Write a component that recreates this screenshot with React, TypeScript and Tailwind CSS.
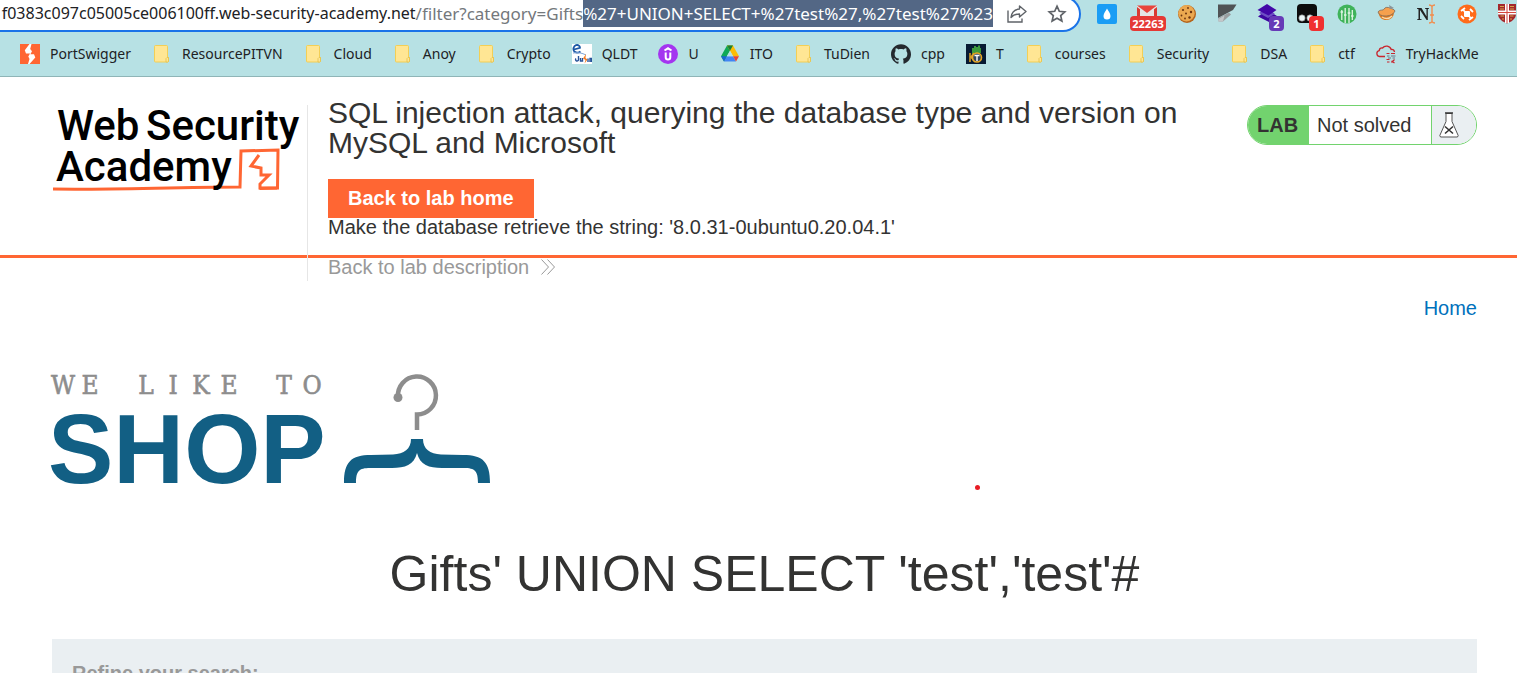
import type { ReactNode } from "react";
import { SiGithub } from "react-icons/si";

function Svg({ box = "0 0 20 20", className = "h-5 w-5", children }: { box?: string; className?: string; children: ReactNode }) {
  return (
    <svg viewBox={box} className={`block shrink-0 ${className}`} fill="none" aria-hidden="true">
      {children}
    </svg>
  );
}

const Folder = () => (
  <Svg>
    <path d="M3.500 1.500h11a1 1 0 0 1 1 1v10.500l1 .5v4l-1 .5h-12a1 1 0 0 1-1-1v-14.500a1 1 0 0 1 1-1z" fill="#ffe694" stroke="#f3cf55" />
    <path d="M14 18v-3.500l1-1h1.500v4l-1 .5z" fill="#ffe694" stroke="#e3c04a" strokeWidth=".8" />
  </Svg>
);

const PortSwigger = () => (
  <Svg>
    <rect width="20" height="20" fill="#ff6633" />
    <path d="M9.500 0 4.800 6.200 6 9.500H10L8.300 12.500 9.500 15 8 20h1.500l5.800-6.500-1.300-3.300H10.400L12 7.200 10.200 5 11.500 0z" fill="#fff" />
  </Svg>
);

const Qldt = () => (
  <Svg>
    <rect width="20" height="20" fill="#fff" />
    <path d="M2 5.500 8 3.800C8 1.500 6 .6 4 1.200 1.500 2 .8 5 2 7c1.300 2 4.500 2 6.500.5" stroke="#1b57a5" strokeWidth="1.800" />
    <path d="M1 9c5-1 9 0 13 2" stroke="#7ea6d6" />
    <path d="M4 14.500a1.500 1.500 0 1 0 2.500 1.500V12M8.500 14v3h2v-3M16 14.500v3.500M18 18v-3.500h1.500V18" stroke="#26539a" strokeWidth="1.400" />
    <path d="m14 10-3 4.500 2.500 1.500-1 3.500 3-4-2-1.500z" fill="#f47b20" />
  </Svg>
);

const Udemy = () => (
  <Svg>
    <circle cx="10" cy="10" r="10" fill="#a435f0" />
    <path d="M6.500 6.500 10 4.300l3.500 2.200M7.700 8.500v4.700a2.300 2.300 0 0 0 4.600 0V8.500" stroke="#fff" strokeWidth="2" />
  </Svg>
);

const Drive = () => (
  <Svg>
    <path d="M7 1.500h6L10 6.700 4 17.500 1 12.300z" fill="#0fa958" />
    <path d="M7 1.500h6l6 10.800h-6z" fill="#fbbc04" />
    <path d="M7 12.300h6l3 5.200H4z" fill="#4285f4" />
    <path d="m1 12.300 3 5.200 3-5.200z" fill="#1967d2" />
    <path d="m13 12.300 3 5.200 3-5.200z" fill="#ea4335" />
    <path d="m7 1.500 3 5.200 3-5.200z" fill="#188038" />
    <path d="m10 6.700 3.200 5.600H6.800z" fill="#b7e1e4" />
  </Svg>
);

const Fist = () => (
  <Svg>
    <rect width="20" height="20" fill="#071a33" />
    <path d="M6 10V4h2V2h2v1h2V1.500h2V4h1v5z" fill="#3c9a3c" />
    <path d="M4 9v9M8 9l-3 4 4 5" stroke="#d09a24" strokeWidth="1.600" />
    <circle cx="11" cy="13.500" r="4.500" stroke="#e8a725" strokeWidth="1.600" fill="#32465e" />
    <path d="M8.500 11.500h5M11 11.500V17" stroke="#fff" strokeWidth="1.400" />
  </Svg>
);

const CloudHack = () => (
  <Svg>
    <path d="M9 12.500H3.500a3 3 0 0 1-.3-5.900A3 3 0 0 1 6.500 4a5 5 0 0 1 8.700 1.500A3 3 0 0 1 18.500 8" stroke="#c9252d" strokeWidth="1.300" />
    <path d="M10.500 9.500h3M15 9.500h4M10.500 15.500h3M15.500 17l3 2M18.500 15.500l-3 3M11 18h2.500" stroke="#c9252d" strokeWidth="1.200" />
    <path d="M11 12h2.500M15 12h4.500M12 14h3M16.500 14H19" stroke="#6b7783" strokeWidth="1.200" />
  </Svg>
);

const bookmarks: { label: string; icon: ReactNode }[] = [
  { label: "PortSwigger", icon: <PortSwigger /> },
  { label: "ResourcePITVN", icon: <Folder /> },
  { label: "Cloud", icon: <Folder /> },
  { label: "Anoy", icon: <Folder /> },
  { label: "Crypto", icon: <Folder /> },
  { label: "QLDT", icon: <Qldt /> },
  { label: "U", icon: <Udemy /> },
  { label: "ITO", icon: <Drive /> },
  { label: "TuDien", icon: <Folder /> },
  { label: "cpp", icon: <SiGithub className="h-5 w-5 shrink-0 text-[#24292e]" /> },
  { label: "T", icon: <Fist /> },
  { label: "courses", icon: <Folder /> },
  { label: "Security", icon: <Folder /> },
  { label: "DSA", icon: <Folder /> },
  { label: "ctf", icon: <Folder /> },
  { label: "TryHackMe", icon: <CloudHack /> },
];

const extensions: { name: string; icon: ReactNode; badge?: string; badgeClass?: string }[] = [
  {
    name: "Droplet",
    icon: (
      <Svg>
        <rect width="20" height="20" rx="2" fill="#1a9df5" />
        <path d="M10 4.500c1 2.500 3.500 4.500 3.500 7.500a3.500 3.500 0 0 1-7 0c0-3 2.500-5 3.500-7.500z" fill="#fff" />
      </Svg>
    ),
  },
  {
    name: "Mail",
    icon: (
      <Svg>
        <rect y="2" width="20" height="14" fill="#e5e5e5" />
        <path d="M0 1.500h20L10 9z" fill="#e8453c" />
        <path d="M0 3v13h3V5.200zM20 3v13h-3V5.200z" fill="#d93a32" />
      </Svg>
    ),
    badge: "22263",
    badgeClass: "-left-[7px] w-9 bg-[#e53935]",
  },
  {
    name: "Cookies",
    icon: (
      <Svg>
        <circle cx="10" cy="10" r="9" fill="#b5651d" />
        <circle cx="9.500" cy="9.300" r="8.200" fill="#eba850" />
        <g fill="#6b3410">
          <circle cx="6" cy="6" r="1.100" />
          <circle cx="11" cy="4" r=".9" />
          <circle cx="14" cy="8" r="1.200" />
          <circle cx="9" cy="9.500" r="1" />
          <circle cx="4.500" cy="11.500" r=".9" />
          <circle cx="12.500" cy="13.500" r="1.200" />
          <circle cx="8" cy="14.500" r=".9" />
        </g>
      </Svg>
    ),
  },
  {
    name: "Flag",
    icon: (
      <Svg>
        <path d="M1 .5h18.500L16 6 1 14z" fill="#505355" />
        <path d="m12 8.500 2 2L6 17.500H1.500V14z" fill="#9a9d9f" />
        <path d="m1.500 15 6-3.500L6 17.500H1.500z" fill="#c3c6c8" />
      </Svg>
    ),
  },
  {
    name: "Layers",
    icon: (
      <Svg>
        <path d="m10 6 10 6-8 6-11-5.500z" fill="#3d07a0" />
        <path d="m10 4 8 6-7 4L2 9z" fill="#6d4fc4" />
        <path d="m10 0 9.500 6-8 5.500L.5 6z" fill="#4308a8" />
      </Svg>
    ),
    badge: "2",
    badgeClass: "left-3 w-[15px] bg-[#673ab7]",
  },
  {
    name: "Monitor",
    icon: (
      <Svg>
        <rect width="20" height="19" rx="4" fill="#0c0c0c" />
        <circle cx="5" cy="14" r="3.200" fill="#e9f5f6" stroke="#777" strokeWidth=".6" />
        <circle cx="13" cy="14" r="3.200" fill="#e9f5f6" stroke="#777" strokeWidth=".6" />
      </Svg>
    ),
    badge: "1",
    badgeClass: "left-3 w-[15px] bg-[#f03030]",
  },
  {
    name: "Equalizer",
    icon: (
      <Svg>
        <circle cx="10" cy="10" r="9.500" fill="#3fb35a" />
        <path d="M4.800 6v10M8.200 4v15M12 4v15M15.300 6v10" stroke="#e0f5e4" strokeWidth="1.300" />
        <path d="M3.500 8h2.600M7 11h2.500M10.700 9h2.600M14 12h2.600" stroke="#e0f5e4" strokeWidth="1.500" />
      </Svg>
    ),
  },
  {
    name: "Quick pot",
    icon: (
      <Svg>
        <path d="M1.500 8.500C2 14 6 16.500 10 16c4-.5 7-3 7-8z" fill="#e07a1f" />
        <path d="M1 8c2-3 5-1 6-3s4-2 6-1 4 1 5 3c-2 4-6 5-10 5-3 0-6-1-7-4z" fill="#f6a04d" stroke="#7a6a5c" strokeWidth=".8" />
        <path d="m12 1 5 3-4 1z" fill="#8b949a" />
        <path d="M5 13c3 2 7 2 10-1" stroke="#fbd9a8" strokeWidth="1.500" />
      </Svg>
    ),
  },
  {
    name: "Name editor",
    icon: (
      <Svg>
        <path d="M0 4h4.500l5 8.500V5L8 4.700V4h4v.7l-1.200.3V16H9.600L3 6v9l1.700.4v.6H0v-.6l1.500-.4V5.200L0 4.700z" fill="#222" />
        <path d="M12 1c2 0 2.500.5 3 1.500.5-1 1-1.500 3-1.500M15 2.500v15M12 19c2 0 2.500-.5 3-1.500.5 1 1 1.500 3 1.500M13 11h4" stroke="#f28c4b" strokeWidth="1.400" />
      </Svg>
    ),
  },
  {
    name: "Orbit",
    icon: (
      <Svg>
        <circle cx="10" cy="10" r="9.500" fill="#ff6b1a" />
        <rect x="7" y="7" width="6" height="6" rx="1" fill="#fff" />
        <path d="m4 7 4-3M13 5l3 3M16 13l-4 3M7 15l-3-3M6 5.500l2 2.500M14 14.500 12 12" stroke="#fff" strokeWidth="1.800" />
      </Svg>
    ),
  },
  {
    name: "Shield",
    icon: (
      <Svg>
        <path d="M1 0h18v10c0 5-5 8-9 9.500C6 18 1 15 1 10z" fill="#a3282c" />
        <path d="M3 2.500h4M3 5h4M13 2.500h4M13 5h4M3.500 12h3.500M13 12h3.500M5 15h2M13 15h2" stroke="#d8a64a" strokeWidth="1.200" />
        <path d="M10 0v19M1 8.500h18" stroke="#fff" strokeWidth="4" />
        <path d="M10 0v19M1 8.500h18" stroke="#d7473f" strokeWidth="1" />
      </Svg>
    ),
  },
];

function BrowserBar() {
  return (
    <header className="overflow-hidden border-b border-[#8fb5b7] bg-[#b7e1e4] font-['Noto_Sans','Open_Sans',sans-serif]">
      <div className="flex h-8 items-start">
        <div className="-mt-1 flex h-9 min-w-0 flex-1 items-center rounded-r-full border-y-2 border-r-2 border-[#1a73e8] bg-white pr-3">
          <div className="flex h-full min-w-0 flex-1 items-start justify-end overflow-hidden pt-[2px] text-[17px] leading-[27px] whitespace-nowrap">
            <span className="text-[16px] text-[#202124]">f0383c097c05005ce006100ff.web-security-academy.net</span>
            <span className="text-[#74787c]">/filter?category=Gifts</span>
            <span className="bg-[#536785] text-white">%27+UNION+SELECT+%27test%27,%27test%27%23</span>
          </div>
          <button type="button" aria-label="Share" className="ml-[14px]">
            <Svg>
              <path d="M1 6.500V18h14v-3.500" stroke="#5f6368" strokeWidth="1.400" />
              <path d="M12.500 2 19 7.500 12.500 13v-3c-4 0-6.500 1-8.500 3.500C4.500 9 7.500 5.500 12.500 5z" stroke="#5f6368" strokeWidth="1.400" strokeLinejoin="round" />
            </Svg>
          </button>
          <button type="button" aria-label="Bookmark this tab" className="ml-5">
            <Svg>
              <path d="m10 2.200 2.300 5.100 5.500.6-4.100 3.700 1.200 5.500-4.900-2.800-4.900 2.800 1.200-5.500L2.200 7.900l5.500-.6z" stroke="#5f6368" strokeWidth="1.700" />
            </Svg>
          </button>
        </div>
        <div className="ml-4 flex shrink-0 gap-5 pt-1">
          {extensions.map((e) => (
            <button key={e.name} type="button" aria-label={e.name} className="relative h-5 w-5">
              {e.icon}
              {e.badge && (
                <span className={`absolute top-3 h-[15px] overflow-hidden rounded-sm text-center text-[11px] leading-[15px] font-bold text-white ${e.badgeClass}`}>
                  {e.badge}
                </span>
              )}
            </button>
          ))}
        </div>
      </div>
      <nav className="flex h-11 items-center gap-[21px] pl-5 text-[14px] leading-5 text-[#202124]">
        {bookmarks.map((b) => (
          <a key={b.label} href="#" className="flex shrink-0 items-center gap-[10px]">
            {b.icon}
            <span className="pb-px">{b.label}</span>
          </a>
        ))}
      </nav>
    </header>
  );
}

function AcademyLogo() {
  return (
    <a href="#" aria-label="Web Security Academy" className="block shrink-0">
      <svg viewBox="0 0 250 92" className="block h-[92px] w-[250px] overflow-visible" fill="none">
        <path d="M1 84c60 1 120-2 187-2l1-36 37-1-.5 38-18 .5" stroke="#ff6633" strokeWidth="3" />
        <path d="m207 50-8 11 10 2v7h8l-9 9v4h17" stroke="#ff6633" strokeWidth="3" />
        <g fill="#000" fontFamily="Roboto, sans-serif" fontWeight="500" fontSize="42">
          <text x="5" y="35">Web</text>
          <text x="94" y="35">Security</text>
          <text x="4" y="76">Academy</text>
        </g>
      </svg>
    </a>
  );
}

function LabStatus() {
  return (
    <div className="flex h-10 w-[230px] shrink-0 overflow-hidden rounded-full border border-[#72d36e] bg-white text-[20px] leading-[38px]">
      <p className="w-[61px] bg-[#72d36e] pl-[9px] font-bold">LAB</p>
      <p className="flex-1 pl-2">Not solved</p>
      <div className="flex w-[45px] items-center border-l border-[#72d36e] bg-[#eaeff2] pl-[7px]">
        <Svg box="0 0 20 26" className="h-[26px] w-5">
          <path d="M7 1.500v8L.8 23.500l.7 1.500h17l.7-1.500L13 9.500v-8z" fill="#fff" stroke="#555" />
          <path d="M6 1h8" stroke="#333" strokeWidth="1.400" />
          <path d="m6 14.500 8 7M14 14.500l-8 7" stroke="#333" strokeWidth="1.600" />
        </Svg>
      </div>
    </div>
  );
}

function LabHeader() {
  return (
    <section className="h-[181px] border-b-[3px] border-[#ff6633] pt-7 pr-10 pl-[52px]">
      <div className="flex items-start">
        <AcademyLogo />
        <div className="ml-[5px] h-44 min-w-0 flex-1 border-l border-[#e6e6e6] pl-5">
          <h2 className="-mt-[7px] max-w-[880px] text-[30px] leading-[30px]">
            SQL injection attack, querying the database type and version on MySQL and Microsoft
          </h2>
          <a href="#" className="mt-[21px] block w-fit bg-[#ff6633] px-5 text-[20px] leading-[39px] font-bold text-white">
            Back to lab home
          </a>
          <p className="-mt-px text-[20px] leading-5">Make the database retrieve the string: '8.0.31-0ubuntu0.20.04.1'</p>
          <a href="#" className="mt-5 flex items-center gap-3 text-[20px] leading-5 text-[#999]">
            Back to lab description
            <Svg box="0 0 14 16" className="h-4 w-[14px]">
              <path d="m.5.500 7 7.500-7 7.500M6.500.500l7 7.500-7 7.500" stroke="#999" />
            </Svg>
          </a>
        </div>
        <LabStatus />
      </div>
    </section>
  );
}

function ShopLogo() {
  return (
    <svg viewBox="0 0 440 120" className="mt-[50px] block h-[120px] w-[440px] overflow-visible" fill="none" role="img" aria-label="We like to shop">
      <text
        x="11 38 66 94 121 149 177 204 232 260"
        y="26"
        textAnchor="middle"
        fill="#8d8d8d"
        stroke="#8d8d8d"
        strokeWidth=".6"
        fontFamily="'DejaVu Serif Condensed', 'DejaVu Serif', serif"
        fontSize="26"
      >
        WE LIKE TO
      </text>
      <text x="-4" y="115" fill="#125f84" fontFamily="Liberation Sans, sans-serif" fontWeight="700" fontSize="98">
        SHOP
      </text>
      <path d="M346 29a19 19 0 1 1 19 17.500V62" stroke="#8d8d8d" strokeWidth="4.500" />
      <circle cx="346" cy="29.500" r="4.500" fill="#8d8d8d" />
      <path
        d="M359 71h12c0 10 7 15 18 15.500l22 .5c20 0 27 7 27 28h-12c0-12-3-15-14-15h-22c-13 0-22-3-25-15-3 12-12 15-25 15h-22c-11 0-14 3-14 15h-12c0-21 7-28 27-28l22-.5c11-.5 18-5.500 18-15.500z"
        fill="#125f84"
      />
    </svg>
  );
}

export default function App() {
  return (
    <div className="relative h-screen overflow-hidden bg-white font-['Liberation_Sans',Arial,sans-serif] text-[#333332]">
      <BrowserBar />
      <LabHeader />
      <main className="pt-10 pr-10 pl-[52px]">
        <nav className="flex justify-end text-[20px] leading-5">
          <a href="#" className="text-[#0071bc]">Home</a>
        </nav>
        <ShopLogo />
        <h1 className="mt-[61px] text-center text-[50px] leading-[50px]">Gifts' UNION SELECT 'test','test'#</h1>
        <section className="mt-10 bg-[#eaeff2] px-5 pt-6 pb-10">
          <p className="text-[20px] leading-5 font-bold text-[#999]">Refine your search:</p>
        </section>
      </main>
      <span className="absolute top-[485px] left-[975px] h-[5px] w-[5px] rounded-full bg-[#e81c24]" />
    </div>
  );
}
